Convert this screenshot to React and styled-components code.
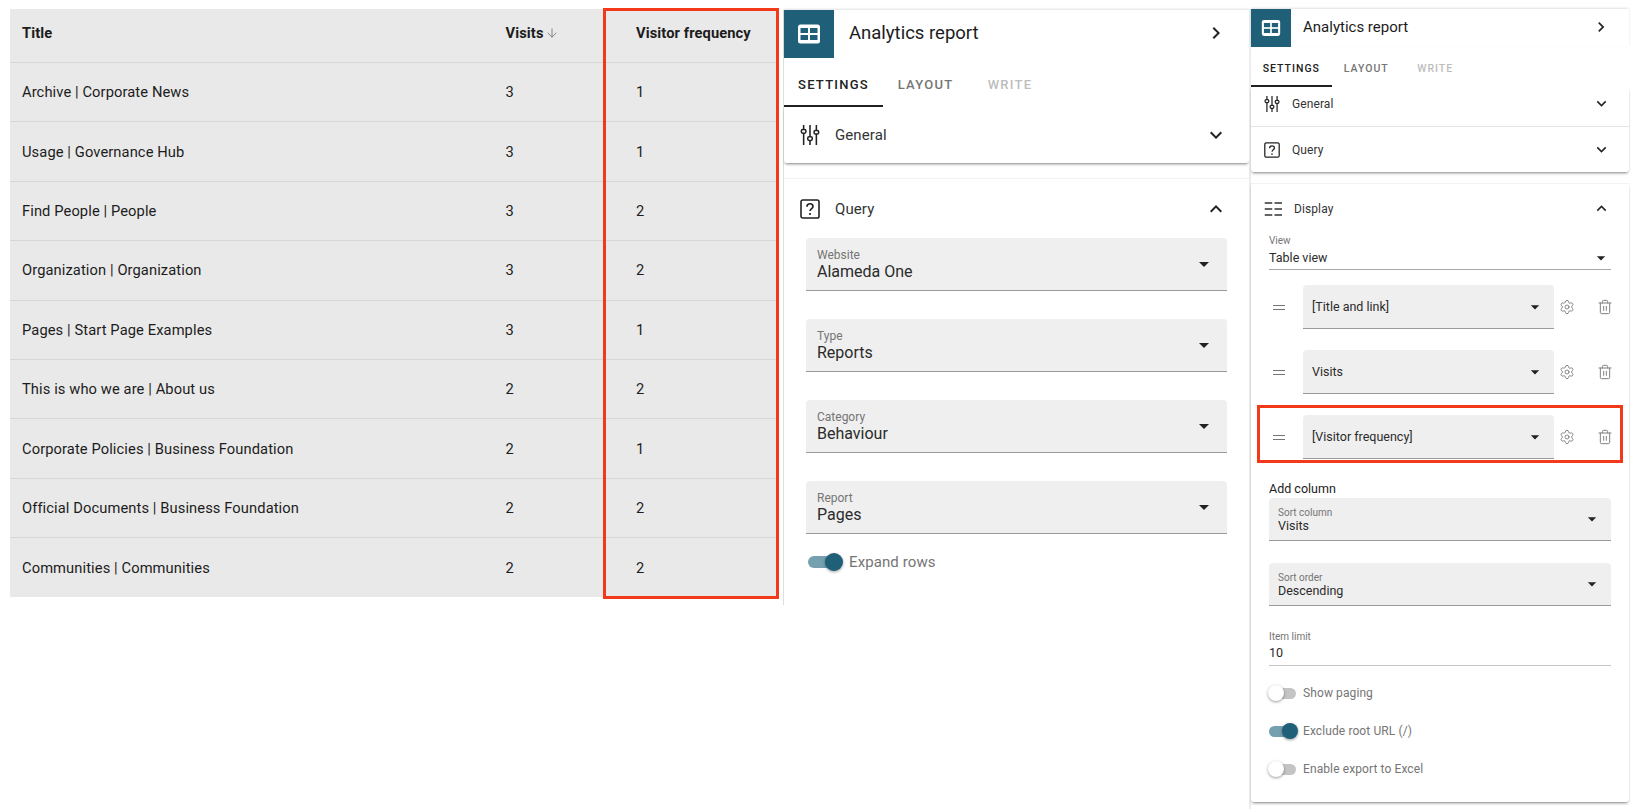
import React from "react";
import styled, { createGlobalStyle } from "styled-components";
import { ArrowDown, Settings, Trash2 } from "lucide-react";
import { MdArrowDropDown, MdChevronRight, MdExpandLess, MdExpandMore } from "react-icons/md";

const GlobalStyle = createGlobalStyle`
  html, body {
    margin: 0;
    padding: 0;
    background: #fff;
    font-family: Roboto, "Liberation Sans", sans-serif;
    color: #212121;
  }
  * { box-sizing: border-box; }
`;

const Page = styled.div`
  display: flex;
  align-items: flex-start;
  width: 1638px;
  height: 809px;
  overflow: hidden;
  padding-left: 10px;
`;

/* ---- report table ---- */

const TableWrap = styled.div`
  position: relative;
  flex: none;
  width: 769px;
  margin: 9px 4px 0 0;
`;

const ReportTable = styled.div`
  width: 767px;
  height: 588px;
  overflow: hidden;
  background: #e9e9e9;
`;

const Row = styled.div`
  display: grid;
  grid-template-columns: 483.5px 130.5px 153px;
  align-items: center;
  height: ${(p) => (p.$head ? "54px" : "59.4px")};
  padding-left: 12px;
  padding-bottom: ${(p) => (p.$head ? "4.5px" : "0")};
  border-bottom: ${(p) => (p.$last ? "0" : "1.5px solid #d6d6d6")};
  font-size: 14.7px;
  font-weight: ${(p) => (p.$head ? 700 : 400)};
  color: #1c1c1c;
`;

const Cell = styled.div`
  display: flex;
  align-items: center;
  gap: 1px;
  letter-spacing: 0.1px;
`;

const ColumnHighlight = styled.div`
  position: absolute;
  top: -1px;
  bottom: -2px;
  left: 593px;
  width: 176px;
  border: 3px solid #f23a1a;
  pointer-events: none;
`;

/* ---- settings panel ---- */

const Panel = styled.div`
  flex: none;
  background: #fff;
  ${(p) =>
    p.$small
      ? `
    width: 380px;
    height: 800px;
    margin-top: 9px;
    border-left: 2px solid #ececec;
    font-size: 12.5px;
  `
      : `
    width: 466px;
    height: 595px;
    margin-top: 10px;
    border-left: 1px solid #dedede;
    font-size: 15px;
  `}
`;

const PanelHeader = styled.div`
  display: flex;
  align-items: center;
  height: ${(p) => (p.$small ? "38px" : "48px")};
  padding-right: ${(p) => (p.$small ? "18px" : "21px")};
  padding-bottom: 2px;
  box-shadow: 0 -1px 2px rgba(0, 0, 0, 0.12);
`;

const HeaderBadge = styled.div`
  display: flex;
  align-items: center;
  justify-content: center;
  flex: none;
  align-self: stretch;
  width: ${(p) => (p.$small ? "40px" : "50px")};
  margin-bottom: -2px;
  padding-bottom: 1px;
  background: #1f5f77;
`;

const PanelTitle = styled.div`
  flex: 1;
  margin-left: ${(p) => (p.$small ? "12px" : "15px")};
  font-size: ${(p) => (p.$small ? "15px" : "18.5px")};
  color: #1c1c1c;
`;

const Tabs = styled.div`
  display: flex;
  height: ${(p) => (p.$small ? "40px" : "49px")};
`;

const Tab = styled.div`
  display: flex;
  align-items: center;
  justify-content: center;
  width: ${(p) => (p.$small ? p.$w * 0.815 : p.$w)}px;
  padding-top: ${(p) => (p.$small ? "4px" : "6px")};
  font-size: ${(p) => (p.$small ? "10.5px" : "13px")};
  font-weight: 500;
  letter-spacing: ${(p) => (p.$small ? "1px" : "1.25px")};
  color: ${(p) => (p.$state === "active" ? "#212121" : p.$state === "off" ? "#bdbdbd" : "#757575")};
  border-bottom: 2px solid ${(p) => (p.$state === "active" ? "#212121" : "transparent")};
`;

const Card = styled.div`
  border-top: ${(p) => (p.$outlined ? "1px solid #f3f3f3" : "0")};
  margin-top: ${(p) => p.$gap || 0}px;
  padding-bottom: ${(p) => p.$foot || 0}px;
  box-shadow: ${(p) => (p.$raised ? "0 2px 3px -1px rgba(0, 0, 0, 0.5)" : "none")};
  border-radius: 0 0 3px 3px;
`;

const SectionHead = styled.div`
  display: flex;
  align-items: center;
  height: ${(p) => p.$h}px;
  padding: 0 ${(p) => (p.$small ? "18px" : "21px")} ${(p) => p.$lift || 0}px ${(p) => (p.$small ? "13px" : "16px")};
  border-bottom: ${(p) => (p.$rule ? "1px solid #e4e4e4" : "0")};
`;

const SectionName = styled.div`
  flex: 1;
  margin-left: ${(p) => (p.$small ? "12px" : "15px")};
  font-size: ${(p) => (p.$small ? "12px" : "15px")};
  color: #333;
  letter-spacing: 0.1px;
`;

const FieldStack = styled.div`
  display: flex;
  flex-direction: column;
  gap: 28px;
  margin: 0 22px;
`;

const Field = styled.div`
  display: flex;
  align-items: center;
  flex: none;
  width: ${(p) => (p.$w ? `${p.$w}px` : "auto")};
  height: ${(p) => p.$h}px;
  padding: 0 ${(p) => p.$padR}px 0 ${(p) => p.$padL}px;
  background: ${(p) => (p.$plain ? "transparent" : "#efefef")};
  border-bottom: 1px solid ${(p) => (p.$plain ? "#a8a8a8" : "#9a9a9a")};
  border-radius: 4px 4px 0 0;
`;

const ViewField = styled(Field)`
  margin: 0 2px;
`;

const ViewCaret = styled.div`
  display: flex;
  flex: none;
  margin-top: 13px;
`;

const FieldText = styled.div`
  flex: 1;
  display: flex;
  flex-direction: column;
  padding-top: ${(p) => p.$top || 0}px;
  padding-bottom: ${(p) => p.$bottom || 0}px;
`;

const FieldLabel = styled.div`
  font-size: ${(p) => (p.$small ? "10px" : "12px")};
  line-height: ${(p) => (p.$small ? "10px" : "14px")};
  margin-bottom: ${(p) => p.$gap || 0}px;
  color: #757575;
`;

const FieldValue = styled.div`
  font-size: ${(p) => (p.$small ? "12.5px" : "16px")};
  line-height: ${(p) => (p.$small ? "15px" : "20px")};
  color: #2b2b2b;
`;

const ToggleRow = styled.div`
  display: flex;
  align-items: center;
  height: ${(p) => (p.$small ? "38px" : "40px")};
  margin: ${(p) => (p.$small ? "0 0 0 18px" : "8px 0 0 24px")};
  color: #757575;
  font-size: ${(p) => (p.$small ? "12px" : "15px")};
  letter-spacing: 0.1px;
`;

const ToggleTrack = styled.div`
  display: flex;
  align-items: center;
  justify-content: ${(p) => (p.$on ? "flex-end" : "flex-start")};
  flex: none;
  width: ${(p) => (p.$small ? "27px" : "33px")};
  height: ${(p) => (p.$small ? "11px" : "12px")};
  margin-right: ${(p) => (p.$small ? "7px" : "8px")};
  background: ${(p) => (p.$on ? "#75a0af" : "#c4c4c4")};
  border-radius: 6px;
`;

const ToggleThumb = styled.div`
  flex: none;
  width: ${(p) => (p.$small ? "16px" : "18px")};
  height: ${(p) => (p.$small ? "16px" : "18px")};
  margin: ${(p) => (p.$on ? "0 -2px 0 0" : "0 0 0 -1px")};
  border-radius: 50%;
  background: ${(p) => (p.$on ? "#1f5f77" : "#fff")};
  box-shadow: 0 1px 3px rgba(0, 0, 0, 0.4);
`;

const DisplayBody = styled.div`
  padding: 0 16px;
`;

const ColumnRows = styled.div`
  display: flex;
  flex-direction: column;
  gap: 21px;
  margin-top: 15px;
`;

const ColumnRow = styled.div`
  position: relative;
  display: flex;
  align-items: center;
  padding-left: 22px;
`;

const DragHandle = styled.div`
  flex: none;
  width: 12px;
  height: 5px;
  margin-right: 18px;
  border-top: 1px solid #757575;
  border-bottom: 1px solid #757575;
`;

const RowTool = styled.div`
  display: flex;
  flex: none;
  margin-left: ${(p) => p.$gap}px;
  color: #808080;
`;

const RowHighlight = styled.div`
  position: absolute;
  top: -10px;
  bottom: -4px;
  left: 6px;
  right: 6px;
  border: 3px solid #f23a1a;
  pointer-events: none;
`;

const AddColumn = styled.div`
  margin: 22px 0 1px 18px;
  line-height: 16px;
  font-size: 12.5px;
  color: #1c1c1c;
`;

const SortFields = styled.div`
  display: flex;
  flex-direction: column;
  gap: 22px;
  margin: 0 18px 22px;
`;

const LimitField = styled.div`
  height: 38px;
  margin: 0 18px 8px;
  padding-top: 4px;
  border-bottom: 1px solid #c4c4c4;
`;

/* ---- drawn icons ---- */

const TableIcon = ({ size }) => (
  <svg width={size} height={size} viewBox="0 0 24 24">
    <rect x="1" y="2.5" width="22" height="19" rx="2.5" fill="#fff" />
    <g fill="#1f5f77">
      <rect x="3.5" y="6" width="7.5" height="5" />
      <rect x="13" y="6" width="7.5" height="5" />
      <rect x="3.5" y="13" width="7.5" height="5" />
      <rect x="13" y="13" width="7.5" height="5" />
    </g>
  </svg>
);

const TuneIcon = ({ width, height }) => (
  <svg width={width} height={height} viewBox="0 0 22 24" fill="none" stroke="#222" strokeWidth="1.7">
    <path d="M4 1v5M4 10v13M11 1v13M11 18v5M18 1v6M18 11v12" />
    <rect x="1.5" y="6" width="5" height="4" rx="1.5" />
    <rect x="8.5" y="14" width="5" height="4" rx="1.5" />
    <rect x="15.5" y="7" width="5" height="4" rx="1.5" />
  </svg>
);

const HelpIcon = ({ size }) => (
  <svg width={size} height={size} viewBox="0 0 24 24" fill="none" stroke="#222">
    <rect x="1.2" y="1.2" width="21.6" height="21.6" rx="2.2" strokeWidth="1.9" />
    <path d="M8.4 9.2c0-2.2 1.6-3.5 3.6-3.5s3.6 1.3 3.6 3.2c0 2.6-3.2 2.7-3.6 5.5" strokeWidth="2" />
    <circle cx="12" cy="18" r="1.3" fill="#222" stroke="none" />
  </svg>
);

const DisplayIcon = ({ size }) => (
  <svg width={size} height={size} viewBox="0 0 24 24" stroke="#333" strokeWidth="2">
    <path d="M1 4h10M14 4h10M1 12h10M14 12h10M1 20h10M14 20h10" />
  </svg>
);

/* ---- parts ---- */

const Caret = ({ size }) => <MdArrowDropDown size={size} color="#222" style={{ flex: "none" }} />;

const Toggle = ({ on, small, label }) => (
  <ToggleRow $small={small}>
    <ToggleTrack $on={on} $small={small}>
      <ToggleThumb $on={on} $small={small} />
    </ToggleTrack>
    {label}
  </ToggleRow>
);

const PanelTop = ({ small }) => (
  <>
    <PanelHeader $small={small}>
      <HeaderBadge $small={small}>
        <TableIcon size={small ? 20 : 24} />
      </HeaderBadge>
      <PanelTitle $small={small}>Analytics report</PanelTitle>
      <MdChevronRight size={small ? 20 : 24} color="#222" />
    </PanelHeader>
    <Tabs $small={small}>
      <Tab $small={small} $w={99} $state="active">SETTINGS</Tab>
      <Tab $small={small} $w={85} $state="idle">LAYOUT</Tab>
      <Tab $small={small} $w={84} $state="off">WRITE</Tab>
    </Tabs>
  </>
);

const LargeField = ({ label, value }) => (
  <Field $h={53} $padL={11} $padR={11}>
    <FieldText $top={2}>
      <FieldLabel>{label}</FieldLabel>
      <FieldValue>{value}</FieldValue>
    </FieldText>
    <Caret size={24} />
  </Field>
);

const SmallField = ({ label, value }) => (
  <Field $h={43} $padL={9} $padR={9}>
    <FieldText $top={3}>
      <FieldLabel $small>{label}</FieldLabel>
      <FieldValue $small>{value}</FieldValue>
    </FieldText>
    <Caret size={20} />
  </Field>
);

const ColumnEntry = ({ value, highlight }) => (
  <ColumnRow>
    <DragHandle />
    <Field $h={44} $padL={9} $padR={9} $w={251}>
      <FieldText>
        <FieldValue $small>{value}</FieldValue>
      </FieldText>
      <Caret size={20} />
    </Field>
    <RowTool $gap={5}><Settings size={16} strokeWidth={1.4} /></RowTool>
    <RowTool $gap={22}><Trash2 size={16} strokeWidth={1.5} /></RowTool>
    {highlight && <RowHighlight />}
  </ColumnRow>
);

const rows = [
  ["Archive | Corporate News", 3, 1],
  ["Usage | Governance Hub", 3, 1],
  ["Find People | People", 3, 2],
  ["Organization | Organization", 3, 2],
  ["Pages | Start Page Examples", 3, 1],
  ["This is who we are | About us", 2, 2],
  ["Corporate Policies | Business Foundation", 2, 1],
  ["Official Documents | Business Foundation", 2, 2],
  ["Communities | Communities", 2, 2],
];

const App = () => (
  <Page>
    <GlobalStyle />

    <TableWrap>
      <ReportTable>
        <Row $head>
          <Cell>Title</Cell>
          <Cell>
            Visits
            <ArrowDown size={14} strokeWidth={1.3} color="#666" />
          </Cell>
          <Cell>Visitor frequency</Cell>
        </Row>
        {rows.map(([title, visits, freq], i) => (
          <Row key={title} $last={i === rows.length - 1}>
            <Cell>{title}</Cell>
            <Cell>{visits}</Cell>
            <Cell>{freq}</Cell>
          </Row>
        ))}
      </ReportTable>
      <ColumnHighlight />
    </TableWrap>

    <Panel>
      <PanelTop />
      <Card $raised>
        <SectionHead $h={56}>
          <TuneIcon width={20} height={22} />
          <SectionName>General</SectionName>
          <MdExpandMore size={24} color="#222" />
        </SectionHead>
      </Card>
      <Card $gap={15} $outlined>
        <SectionHead $h={59}>
          <HelpIcon size={20} />
          <SectionName>Query</SectionName>
          <MdExpandLess size={24} color="#222" />
        </SectionHead>
        <FieldStack>
          <LargeField label="Website" value="Alameda One" />
          <LargeField label="Type" value="Reports" />
          <LargeField label="Category" value="Behaviour" />
          <LargeField label="Report" value="Pages" />
        </FieldStack>
        <Toggle on label="Expand rows" />
      </Card>
    </Panel>

    <Panel $small>
      <PanelTop small />
      <Card $raised>
        <SectionHead $small $h={40} $lift={6} $rule>
          <TuneIcon width={16} height={18} />
          <SectionName $small>General</SectionName>
          <MdExpandMore size={19} color="#222" />
        </SectionHead>
        <SectionHead $small $h={45}>
          <HelpIcon size={16} />
          <SectionName $small>Query</SectionName>
          <MdExpandMore size={19} color="#222" />
        </SectionHead>
      </Card>
      <Card $gap={11} $outlined $raised $foot={14}>
        <SectionHead $small $h={49}>
          <DisplayIcon size={18} />
          <SectionName $small>Display</SectionName>
          <MdExpandLess size={19} color="#222" />
        </SectionHead>
        <DisplayBody>
          <ViewField $plain $h={37} $padL={0} $padR={0}>
            <FieldText $top={1} $bottom={3}>
              <FieldLabel $small $gap={4}>View</FieldLabel>
              <FieldValue $small>Table view</FieldValue>
            </FieldText>
            <ViewCaret><Caret size={20} /></ViewCaret>
          </ViewField>
        </DisplayBody>
        <ColumnRows>
          <ColumnEntry value="[Title and link]" />
          <ColumnEntry value="Visits" />
          <ColumnEntry value="[Visitor frequency]" highlight />
        </ColumnRows>
        <AddColumn>Add column</AddColumn>
        <SortFields>
          <SmallField label="Sort column" value="Visits" />
          <SmallField label="Sort order" value="Descending" />
        </SortFields>
        <LimitField>
          <FieldLabel $small $gap={3}>Item limit</FieldLabel>
          <FieldValue $small>10</FieldValue>
        </LimitField>
        <Toggle small label="Show paging" />
        <Toggle small on label="Exclude root URL (/)" />
        <Toggle small label="Enable export to Excel" />
      </Card>
    </Panel>
  </Page>
);

export default App;
